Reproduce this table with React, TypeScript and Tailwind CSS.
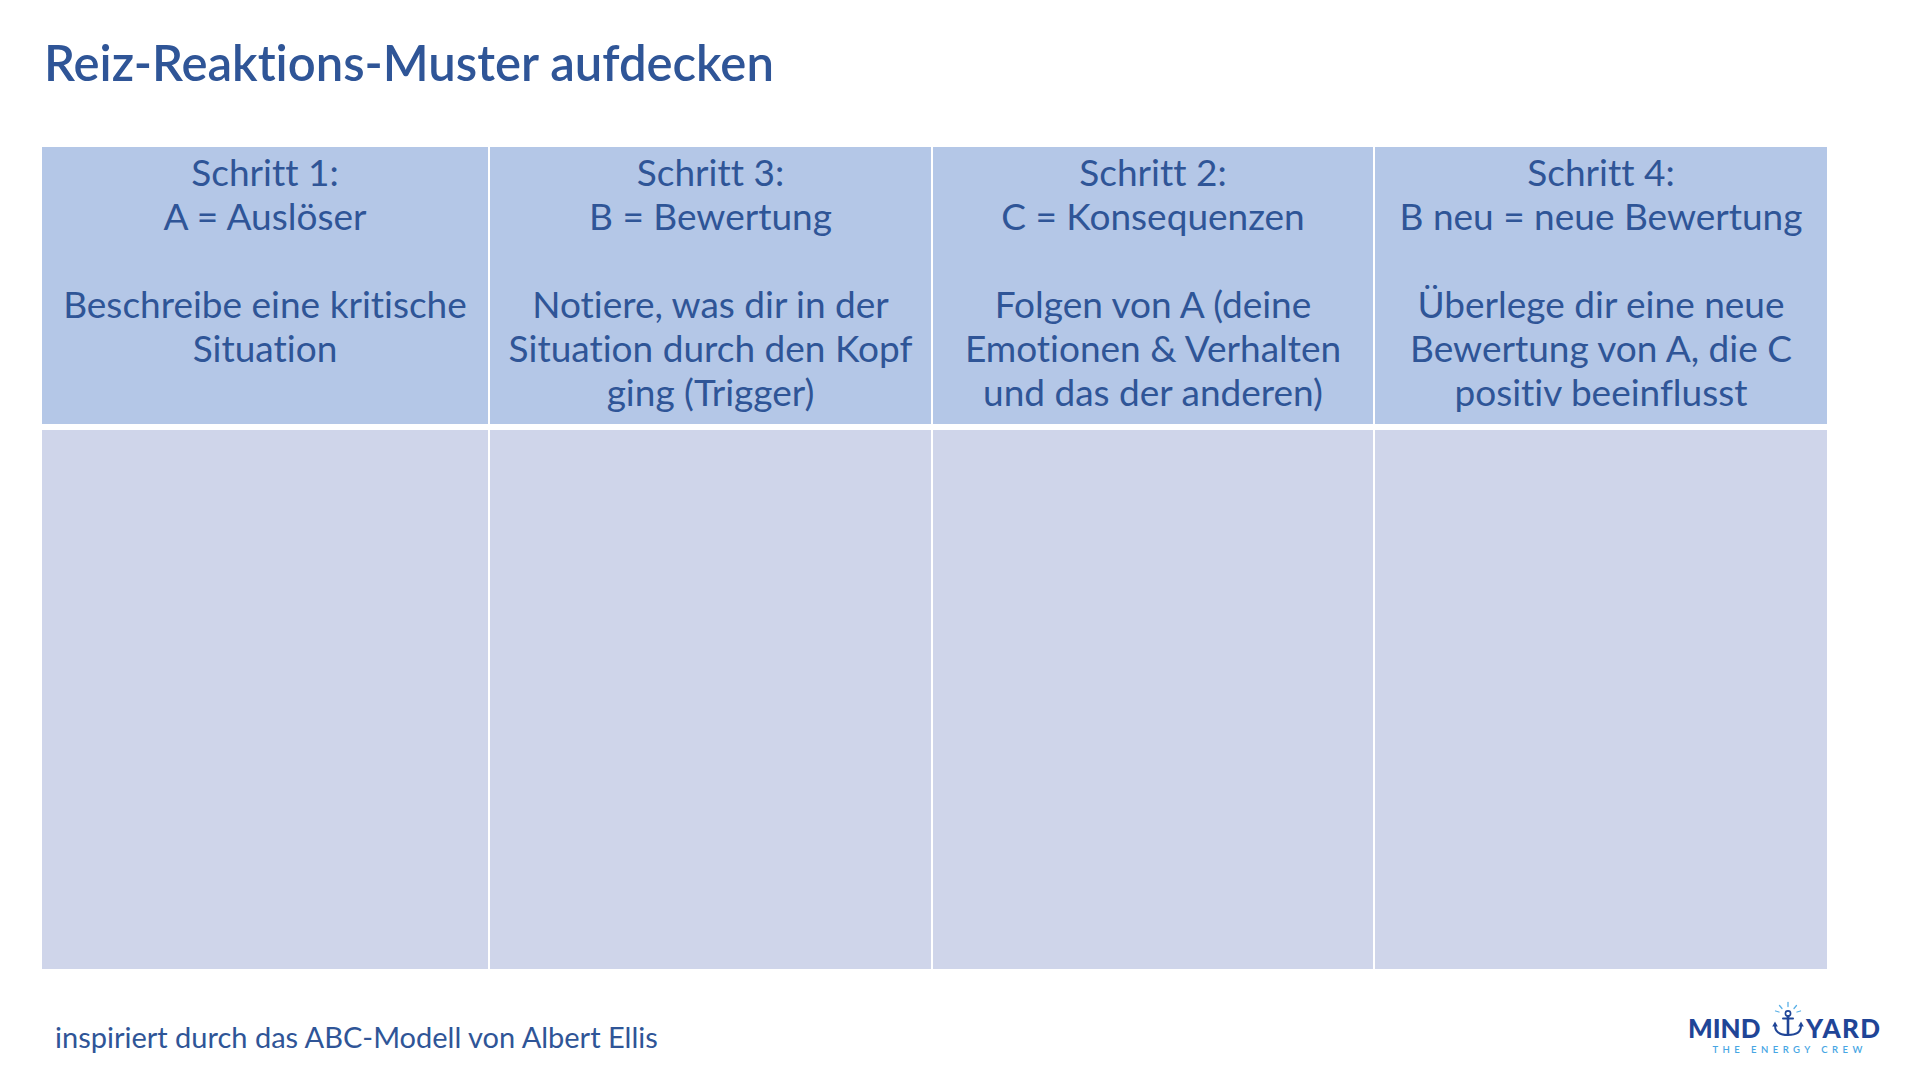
const headers: string[][] = [
  ['Schritt 1:', 'A = Auslöser', '', 'Beschreibe eine kritische', 'Situation'],
  ['Schritt 3:', 'B = Bewertung', '', 'Notiere, was dir in der', 'Situation durch den Kopf', 'ging (Trigger)'],
  ['Schritt 2:', 'C = Konsequenzen', '', 'Folgen von A (deine', 'Emotionen & Verhalten', 'und das der anderen)'],
  ['Schritt 4:', 'B neu = neue Bewertung', '', 'Überlege dir eine neue', 'Bewertung von A, die C', 'positiv beeinflusst'],
];

function Anchor() {
  return (
    <svg width="44" height="44" viewBox="0 0 44 44" fill="none" className="shrink-0">
      {/* rays */}
      <g stroke="#5ab0e6" strokeWidth="1.3" strokeLinecap="round">
        <line x1="22" y1="4.5" x2="22" y2="8.5" />
        <line x1="13.5" y1="7.5" x2="16" y2="10.5" />
        <line x1="30.5" y1="7.5" x2="28" y2="10.5" />
        <line x1="9.5" y1="13" x2="13" y2="14" />
        <line x1="34.5" y1="13" x2="31" y2="14" />
      </g>
      <g stroke="#1f4597" strokeLinecap="round" fill="none">
        <circle cx="22" cy="15.5" r="2.6" strokeWidth="1.6" />
        <line x1="17" y1="20.5" x2="27" y2="20.5" strokeWidth="2" />
        <line x1="22" y1="18.5" x2="22" y2="36.5" strokeWidth="2.6" />
        <path d="M9 27.5 Q9 37 22 37 Q35 37 35 27.5" strokeWidth="2" />
      </g>
      <path d="M6.2 28.5 L9 23.5 L11.8 28.5 Z" fill="#1f4597" />
      <path d="M32.2 28.5 L35 23.5 L37.8 28.5 Z" fill="#1f4597" />
    </svg>
  );
}

export default function App() {
  return (
    <div className="flex h-[1085px] w-[1920px] flex-col overflow-hidden bg-white font-['Lato','Open_Sans',sans-serif] text-[#2f5597] [font-variant-ligatures:none]">
      {/* title */}
      <h1 className="pl-[44px] pt-[39px] text-[49px] leading-[46px] font-semibold">
        Reiz-Reaktions-Muster aufdecken
      </h1>

      {/* table */}
      <div className="ml-[42px] mt-[62px] grid grid-cols-[446px_441px_440px_452px] grid-rows-[277px_539px] gap-x-[2px] gap-y-[6px] bg-white">
        {headers.map((lines, i) => (
          <div key={i} className="flex flex-col items-center bg-[#b4c7e7] pt-[3px] text-[37px] leading-[44px]">
            {lines.map((l, j) => (
              <div key={j} className="h-[44px] whitespace-nowrap">
                {l}
              </div>
            ))}
          </div>
        ))}
        {headers.map((_, i) => (
          <div key={'b' + i} className="bg-[#cfd5ea]" />
        ))}
      </div>

      {/* footer */}
      <div className="flex items-start justify-between pl-[55px] pr-[33px] pt-[29px]">
        <p className="mt-[24px] text-[29px] leading-[29px]">
          inspiriert durch das ABC-Modell von Albert Ellis
        </p>
        <div className="flex w-[199px] flex-col items-center">
          <div className="flex w-[199px] items-start">
            <span className="mt-[17px] w-[72px] whitespace-nowrap text-[26px] leading-[26px] font-black text-[#1f4597]">MIND</span>
            <div className="ml-[6px]">
              <Anchor />
            </div>
            <span className="-ml-[4px] mt-[17px] w-[81px] whitespace-nowrap text-[26px] leading-[26px] font-black tracking-[0.05em] text-[#1f4597]">YARD</span>
          </div>
          <span className="mt-[3px] pl-[0.45em] text-[9.5px] leading-[10px] font-semibold tracking-[0.47em] text-[#47a6e4]">
            THE ENERGY CREW
          </span>
        </div>
      </div>
    </div>
  );
}
